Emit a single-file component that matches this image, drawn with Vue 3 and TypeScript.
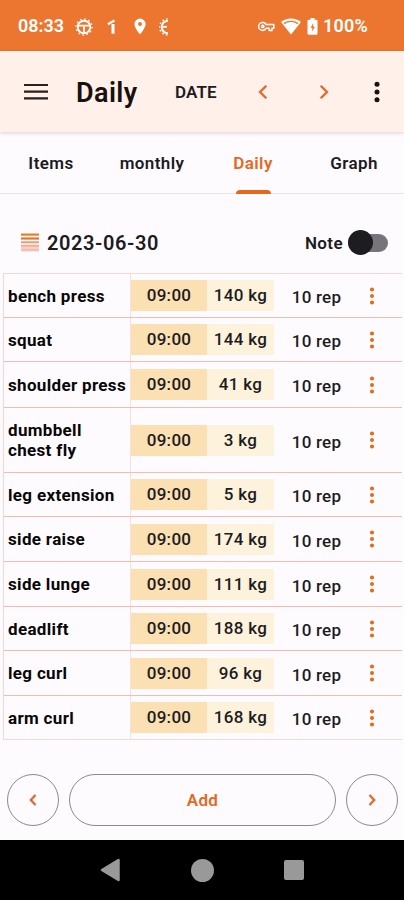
<script setup lang="ts">
interface Entry {
  name: string
  weight: number
  height: number
}

const tabs: string[] = ['Items', 'monthly', 'Daily', 'Graph']
const activeTab = 'Daily'

const entries: Entry[] = [
  { name: 'bench press', weight: 140, height: 44 },
  { name: 'squat', weight: 144, height: 44 },
  { name: 'shoulder press', weight: 41, height: 46 },
  { name: 'dumbbell chest fly', weight: 3, height: 65 },
  { name: 'leg extension', weight: 5, height: 44 },
  { name: 'side raise', weight: 174, height: 45 },
  { name: 'side lunge', weight: 111, height: 45 },
  { name: 'deadlift', weight: 188, height: 44 },
  { name: 'leg curl', weight: 96, height: 45 },
  { name: 'arm curl', weight: 168, height: 44 },
]
</script>

<template>
  <div class="screen">
    <header class="status">
      <span class="clock">08:33</span>
      <svg class="s-wheel" width="18" height="18" viewBox="0 0 18 18" fill="none" stroke="#fff">
        <circle cx="9" cy="9" r="6.3" stroke-width="1.9" />
        <circle cx="9" cy="9" r="8" stroke-width="1.4" stroke-dasharray="1.5 2.69" />
        <path d="M3 7.7h12M9 8v7" stroke-width="1.8" />
      </svg>
      <svg class="s-one" width="9" height="16" viewBox="0 0 9 16" fill="none" stroke="#fff">
        <path d="M.8 5.2 7.5 1.6" stroke-width="2.3" />
        <path d="M6 5v9.7" stroke-width="3" />
      </svg>
      <svg class="s-pin" width="12" height="17" viewBox="0 0 12 17">
        <path fill="#fff" fill-rule="evenodd" d="M6 .5A5.6 5.6 0 0 0 .4 6.1C.4 10 6 16.5 6 16.5S11.6 10 11.6 6.1A5.6 5.6 0 0 0 6 .5Zm0 3.6a2 2 0 1 1 0 4 2 2 0 0 1 0-4Z" />
      </svg>
      <svg class="s-half" width="9" height="18" viewBox="0 0 9 18" fill="none" stroke="#fff">
        <path d="M9 2.7a6.3 6.3 0 0 0 0 12.6" stroke-width="2" />
        <path d="M8.5 1a8 8 0 0 0 0 16" stroke-width="1.5" stroke-dasharray="1.5 2.4" />
        <path d="M3 8.8h5" stroke-width="1.8" />
      </svg>
      <span class="spacer"></span>
      <svg class="s-key" width="17" height="11" viewBox="0 0 17 11" fill="none" stroke="#fff" stroke-width="1.5">
        <path d="M8.2 3.6A4 4 0 1 0 8.2 7.2H11.2V9.6H14V7.2H15.8V3.6Z" stroke-linejoin="round" />
        <circle cx="4.8" cy="5.4" r="1.1" />
      </svg>
      <svg class="s-wifi" width="20" height="17" viewBox="0 0 20 17">
        <path fill="#fff" d="M10 .4C6.2.4 2.7 1.7 0 4L10 16.5 20 4C17.3 1.7 13.8.4 10 .4Z" />
        <path fill="none" stroke="#ec762f" stroke-width="1.3" d="M3 5.6C7 2.7 13 2.7 17 5.6" />
      </svg>
      <svg class="s-bat" width="11" height="17" viewBox="0 0 11 17">
        <path fill="#fff" d="M3.5 0h4v1.8h1.8a1.2 1.2 0 0 1 1.2 1.2v12.500a1.200 1.200 0 0 1-1.200 1.200H1.700A1.200 1.200 0 0 1 .5 15.500V3a1.200 1.200 0 0 1 1.200-1.200h1.800Z" />
        <path fill="#ec762f" d="M6.200 5 3.600 9.700h1.700v4l2.600-4.900H6.200Z" />
      </svg>
      <span class="percent">100%</span>
    </header>

    <div class="appbar">
      <svg class="menu" width="24" height="18" viewBox="0 0 24 18" stroke="#28211f" stroke-width="2.200">
        <path d="M0 2h24M0 8.700h24M0 15.400h24" />
      </svg>
      <h1>Daily</h1>
      <span class="date-btn">DATE</span>
      <svg class="prev" width="10" height="16" viewBox="0 0 10 16"><path class="chev" d="M8.300 1.800 2 8l6.300 6.200" /></svg>
      <svg class="next" width="10" height="16" viewBox="0 0 10 16"><path class="chev" d="M1.700 1.800 8 8l-6.300 6.200" /></svg>
      <svg class="more" width="6" height="22" viewBox="0 0 6 22" fill="#161210">
        <circle cx="3" cy="3.300" r="2.500" /><circle cx="3" cy="11" r="2.500" /><circle cx="3" cy="18.700" r="2.500" />
      </svg>
    </div>

    <nav class="tabs">
      <div v-for="tab in tabs" :key="tab" class="tab" :class="{ active: tab === activeTab }">
        <span>{{ tab }}</span>
      </div>
    </nav>

    <main>
      <div class="day">
        <svg width="18" height="19" viewBox="0 0 18 19">
          <rect width="18" height="2.200" y="0.500" fill="#ed7b24" />
          <rect width="18" height="2.200" y="4.400" fill="#e8732c" />
          <rect width="18" height="1.900" y="8.300" fill="#eb9873" />
          <rect width="18" height="7" y="11.500" fill="#f7cfc3" />
          <rect width="18" height="1.600" y="12" fill="#f0ad98" />
          <rect width="18" height="1.600" y="16" fill="#f3b9aa" />
        </svg>
        <span class="day-text">2023-06-30</span>
        <span class="spacer"></span>
        <span class="note">Note</span>
        <div class="switch"><div class="knob"></div></div>
      </div>

      <div class="table">
        <div v-for="e in entries" :key="e.name" class="row" :style="{ height: e.height + 'px' }">
          <div class="name"><span>{{ e.name }}</span></div>
          <div class="time">09:00</div>
          <div class="weight">{{ e.weight }} kg</div>
          <div class="rep">10 rep</div>
          <svg class="dots" width="6" height="18" viewBox="0 0 6 18" fill="#e36c19">
            <circle cx="3" cy="2.500" r="2.050" /><circle cx="3" cy="9" r="2.050" /><circle cx="3" cy="15.500" r="2.050" />
          </svg>
        </div>
      </div>

      <div class="actions">
        <div class="round">
          <svg width="8" height="12" viewBox="0 0 8 12"><path class="chev" d="M6.500 1 1.800 6l4.700 5" /></svg>
        </div>
        <div class="add">Add</div>
        <div class="round">
          <svg width="8" height="12" viewBox="0 0 8 12"><path class="chev" d="M1.500 1 6.200 6l-4.700 5" /></svg>
        </div>
      </div>
    </main>

    <footer class="navbar">
      <svg width="20" height="24" viewBox="0 0 20 24"><path d="M18.500 2v20L2 12Z" fill="#999" stroke="#999" stroke-width="2.500" stroke-linejoin="round" /></svg>
      <div class="home"></div>
      <div class="recent"></div>
    </footer>
  </div>
</template>

<style>
body {
  margin: 0;
}
</style>

<style scoped>
.screen {
  width: 404px;
  height: 900px;
  box-sizing: border-box;
  display: flex;
  flex-direction: column;
  overflow: hidden;
  background: #fefbff;
  color: #1c1b1f;
  font-family: Roboto, 'Liberation Sans', sans-serif;
  font-weight: 500;
}
svg {
  display: block;
  flex: none;
}
.spacer {
  flex: 1;
}
.status {
  height: 51px;
  flex: none;
  display: flex;
  align-items: center;
  padding: 2px 34px 0 18px;
  background: #ec762f;
  color: #fff;
  font-size: 18px;
  font-weight: 600;
  box-sizing: border-box;
}
.clock {
  width: 57px;
  margin-top: -2px;
}
.s-one {
  margin-left: 14px;
}
.s-pin {
  margin-left: 18px;
}
.s-half {
  margin-left: 13px;
}
.s-wifi {
  margin-left: 6px;
}
.s-bat {
  margin-left: 6px;
}
.percent {
  width: 47px;
  margin: -2px 0 0 5px;
  white-space: nowrap;
  letter-spacing: 0.2px;
}
.appbar {
  height: 81px;
  flex: none;
  display: flex;
  align-items: center;
  padding: 0 24px;
  background: #fff0ea;
  box-shadow: 0 1px 4px rgba(60, 40, 60, 0.2);
  box-sizing: border-box;
  z-index: 1;
}
h1 {
  width: 99px;
  margin: 3px 0 0 28px;
  font-size: 27px;
  font-weight: 600;
  line-height: 32px;
  letter-spacing: 0.4px;
  color: #17110f;
}
.date-btn {
  width: 83px;
  font-size: 17px;
  font-weight: 600;
  letter-spacing: 0.1px;
}
.next {
  margin-left: 51px;
}
.more {
  margin-left: 45px;
}
.chev {
  fill: none;
  stroke: #e5672a;
  stroke-width: 2.3;
}
.tabs {
  height: 61px;
  flex: none;
  display: grid;
  grid-template-columns: repeat(4, 101px);
  border-bottom: 1px solid #e7e3e8;
}
.tab {
  position: relative;
  display: flex;
  align-items: center;
  justify-content: center;
  padding-left: 1px;
  font-size: 17px;
  font-weight: 600;
  letter-spacing: 0.4px;
}
.tab.active {
  color: #e5681c;
}
.tab.active::after {
  content: '';
  position: absolute;
  left: 34px;
  bottom: -1px;
  width: 35px;
  height: 4px;
  border-radius: 4px 4px 0 0;
  background: #e5681c;
}
main {
  height: 645px;
  display: flex;
  flex-direction: column;
}
.day {
  height: 79px;
  flex: none;
  display: flex;
  align-items: center;
  padding: 18px 16px 0 21px;
  box-sizing: border-box;
}
.day-text {
  margin-left: 8px;
  font-size: 20px;
  font-weight: 600;
  letter-spacing: 0.6px;
}
.note {
  margin-right: 5px;
  font-size: 17px;
  font-weight: 600;
  letter-spacing: 0.4px;
}
.switch {
  width: 40px;
  height: 18px;
  display: flex;
  align-items: center;
  border-radius: 9px;
  background: #77757b;
}
.knob {
  width: 25px;
  height: 25px;
  border-radius: 50%;
  background: #1d1c20;
}
.table {
  margin: 0 2px 0 3px;
  border-top: 1px solid #f9d8d3;
  border-left: 1px solid #f9d5cf;
}
.row {
  display: grid;
  grid-template-columns: 127px 76px 67px 85px 26px 1fr;
  align-items: center;
  box-sizing: border-box;
  border-bottom: 1px solid #f4bcb0;
  font-size: 17px;
}
.row:last-child {
  border-bottom-color: #f9d8d3;
}
.name {
  height: 100%;
  display: flex;
  align-items: center;
  padding-left: 4px;
  box-sizing: border-box;
  border-right: 1px solid #f9e0dd;
  color: #080708;
  line-height: 20px;
  font-weight: 700;
  letter-spacing: 0.33px;
}
.name span {
  width: 121px;
}
.time,
.weight {
  height: 31px;
  line-height: 31px;
  text-align: center;
  font-weight: 500;
  letter-spacing: 0.3px;
}
.time {
  background: #fbe0b3;
}
.weight {
  background: #fdf3dc;
}
.rep {
  padding-top: 3px;
  text-align: center;
  letter-spacing: 0.25px;
}
.dots {
  justify-self: center;
}
.actions {
  display: flex;
  gap: 10px;
  padding: 34px 6px 0 7px;
}
.round,
.add {
  height: 52px;
  display: flex;
  align-items: center;
  justify-content: center;
  box-sizing: border-box;
  border: 1px solid #8c8a8f;
  border-radius: 26px;
}
.round {
  width: 52px;
  flex: none;
}
.add {
  flex: 1;
  color: #e5681c;
  font-size: 17px;
  font-weight: 600;
  letter-spacing: 0.3px;
}
.navbar {
  height: 60px;
  flex: none;
  margin-top: auto;
  display: flex;
  align-items: center;
  padding-left: 100px;
  background: #000;
}
.home {
  width: 23px;
  height: 23px;
  margin-left: 71px;
  border-radius: 50%;
  background: #999;
}
.recent {
  width: 20px;
  height: 20px;
  margin-left: 70px;
  border-radius: 2px;
  background: #999;
}
</style>
